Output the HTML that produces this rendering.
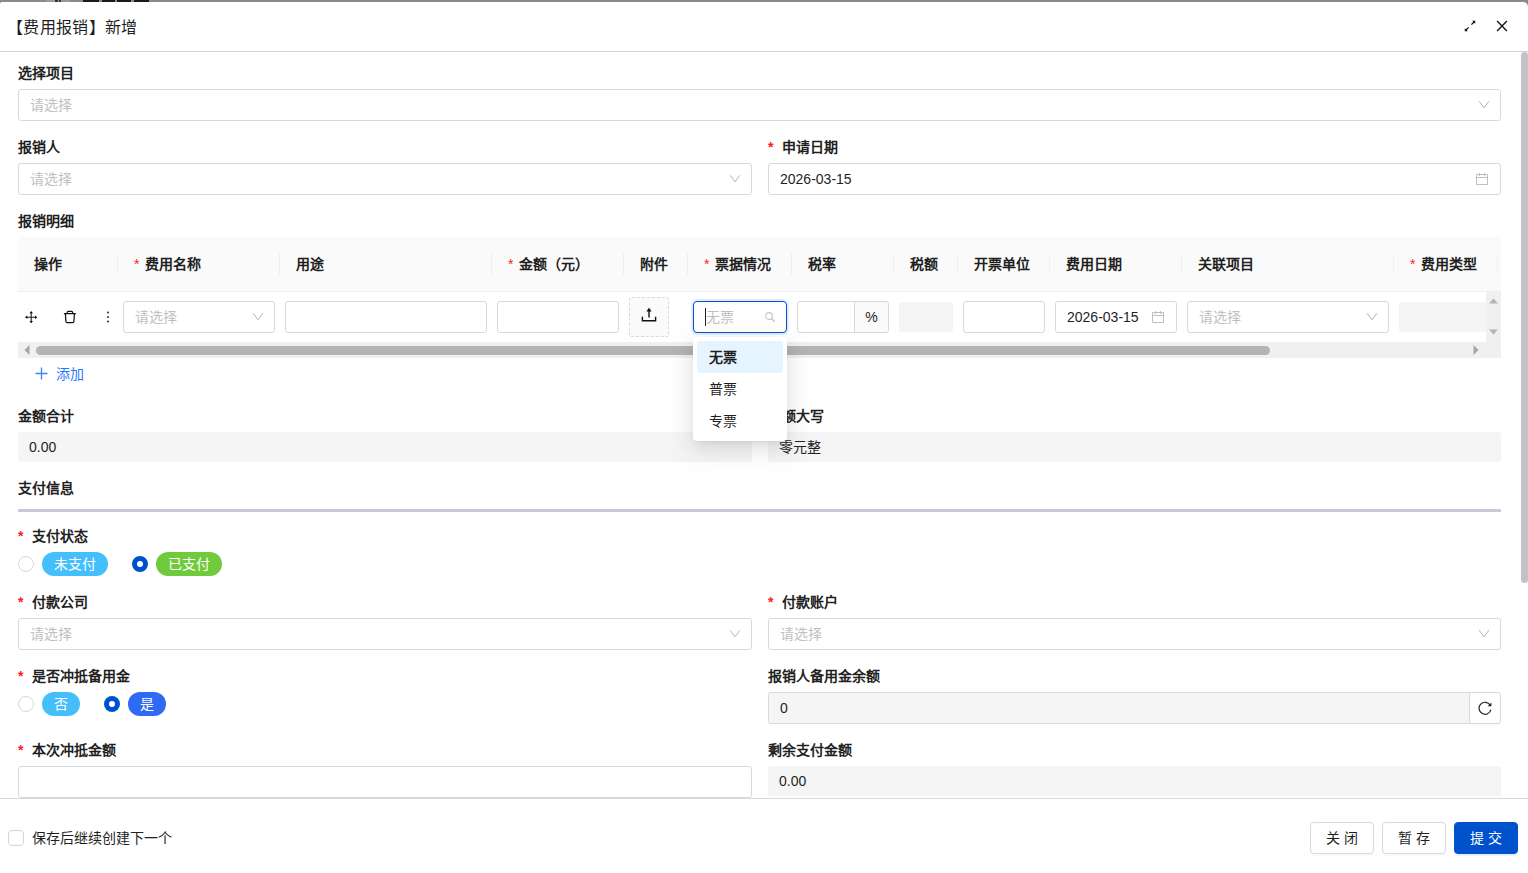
<!DOCTYPE html>
<html lang="zh-CN">
<head>
<meta charset="utf-8">
<title>费用报销 新增</title>
<style>
*{box-sizing:border-box;margin:0;padding:0}
html,body{width:1528px;height:873px;overflow:hidden;background:#8c8c8c;font-family:"Liberation Sans",sans-serif;font-size:14px;color:#1f1f1f}
.abs{position:absolute}
#backdrop{position:absolute;left:0;top:0;width:1528px;height:3px;background:#8a8a8a}
#dlg{position:absolute;left:0;top:2px;width:1528px;height:871px;background:#fff;border-radius:2px 5px 0 0;overflow:hidden}
#hdr{position:absolute;left:0;top:2px;width:1528px;height:50px;border-bottom:1px solid #d4d4d4}
#title{position:absolute;left:7px;top:15px;letter-spacing:.35px;font-size:16px;line-height:22px;color:#1f1f1f;white-space:nowrap}
.lbl{position:absolute;font-weight:bold;font-size:14px;line-height:22px;white-space:nowrap;color:#1f1f1f}
.lbl .req{color:#ff1a1a;font-weight:bold;display:inline-block;width:14px}
.inp{position:absolute;height:32px;border:1px solid #d9d9d9;border-radius:3px;background:#fff;font-size:14px;line-height:30px;padding-left:11px;white-space:nowrap;color:#1f1f1f}
.ph{color:#bfbfbf}
.fill{position:absolute;height:30px;border-radius:3px;background:#f5f5f5;line-height:30px;padding-left:11px;font-size:14px;color:#1f1f1f}
.chev{position:absolute;right:10px;top:8px;width:12px;height:12px}
.cal{position:absolute;right:11px;top:9px;width:14px;height:14px}
#vscroll{position:absolute;left:1521px;top:52px;width:7px;height:531px;background:#c1c3c9;border-radius:4px}
/* table */
#th{position:absolute;left:18px;top:237px;width:1483px;height:55px;background:#fafafa;border-bottom:1px solid #f0f0f0}
.thc{position:absolute;top:16px;font-weight:bold;line-height:22px;white-space:nowrap}
.thc .req{color:#ff1a1a;font-weight:normal;margin-right:6px}
.sep{position:absolute;top:16px;width:1px;height:22px;background:#f0f0f0}
#hs{position:absolute;left:18px;top:342px;width:1468px;height:16px;background:#f0f0f0}
#hs .thumb{position:absolute;left:18px;top:4px;width:1234px;height:9px;border-radius:4.5px;background:#b4b4b4}
.tag{position:absolute;height:24px;border-radius:12px;color:#fff;font-size:14px;line-height:24px;text-align:center}
.radio{position:absolute;width:16px;height:16px;border-radius:50%;border:1px solid #d9d9d9;background:#fff}
.radio.on{border:5px solid #0052cc}
#ftr{position:absolute;left:0;top:798px;width:1528px;height:75px;background:#fff;border-top:1px solid #d8d8d8}
.btn{position:absolute;top:23px;width:64px;height:32px;border:1px solid #d9d9d9;border-radius:4px;background:#fff;line-height:30px;text-align:center;font-size:14px;letter-spacing:4px;padding-left:4px;box-shadow:0 2px 0 rgba(0,0,0,.02)}
.btn.pri{background:#0052cc;border-color:#0052cc;color:#fff;box-shadow:0 2px 0 rgba(5,105,255,.1)}
#dd{position:absolute;left:693px;top:337px;width:94px;height:104px;background:#fff;border-radius:4px;box-shadow:0 6px 16px 0 rgba(0,0,0,.08),0 3px 6px -4px rgba(0,0,0,.12),0 9px 28px 8px rgba(0,0,0,.05)}
#dd .it{position:absolute;left:4px;width:86px;height:32px;line-height:32px;padding-left:12px;border-radius:3px}
</style>
</head>
<body>
<div id="backdrop"><div class="abs" style="left:46px;top:0;width:24px;height:2px;background:#9a9a9a"></div><div class="abs" style="left:55px;top:0;width:3px;height:2px;background:#333"></div><div class="abs" style="left:59px;top:0;width:2px;height:2px;background:#333"></div><div class="abs" style="left:83px;top:0;width:66px;height:2px;background:#1a1a1a"></div><div class="abs" style="left:99px;top:0;width:3px;height:2px;background:#8a8a8a"></div><div class="abs" style="left:115px;top:0;width:2px;height:2px;background:#8a8a8a"></div><div class="abs" style="left:131px;top:0;width:3px;height:2px;background:#8a8a8a"></div></div>
<div id="dlg"><div id="c" style="position:absolute;left:0;top:-2px;width:1528px;height:873px">
  <div id="hdr">
    <div id="title">【费用报销】新增</div>
    <svg class="abs" style="left:1463px;top:17px" width="14" height="14" viewBox="0 0 14 14"><path d="M2.2 11.8 L5.6 8.4 M8.4 5.6 L11.8 2.2" stroke="#111" stroke-width="1.3" fill="none"/><path d="M9.2 1.8h3v3z M1.8 9.2v3h3z" fill="#111"/></svg>
    <svg class="abs" style="left:1496px;top:18px" width="12" height="12" viewBox="0 0 12 12"><path d="M1.1 1 L10.9 11 M10.9 1 L1.1 11" stroke="#111" stroke-width="1.3" fill="none"/></svg>
  </div>
  <div class="lbl" style="left:18px;top:62px">选择项目</div>
  <div class="inp" style="left:18px;top:89px;width:1483px"><span class="ph">请选择</span><svg class="chev" viewBox="0 0 12 12"><path d="M1.2 3.3 L6 9.8 L10.8 3.3" fill="none" stroke="#b4b4b4" stroke-width="1"/></svg></div>
  <div class="lbl" style="left:18px;top:136px">报销人</div>
  <div class="inp" style="left:18px;top:163px;width:734px"><span class="ph">请选择</span><svg class="chev" viewBox="0 0 12 12"><path d="M1.2 3.3 L6 9.8 L10.8 3.3" fill="none" stroke="#b4b4b4" stroke-width="1"/></svg></div>
  <div class="lbl" style="left:768px;top:136px"><span class="req">*</span>申请日期</div>
  <div class="inp" style="left:768px;top:163px;width:733px">2026-03-15<svg class="cal" viewBox="0 0 14 14"><path d="M1.5 1.5h11v10h-11z M1.5 4.5h11 M4.5 0v3 M9.5 0v3" fill="none" stroke="#bfbfbf" stroke-width="1"/></svg></div>
  <div class="lbl" style="left:18px;top:210px">报销明细</div>
  <div id="th"><div class="thc" style="left:16px">操作</div><div class="thc" style="left:116px"><span class="req">*</span>费用名称</div><div class="thc" style="left:278px">用途</div><div class="thc" style="left:490px"><span class="req">*</span>金额（元）</div><div class="thc" style="left:622px">附件</div><div class="thc" style="left:686px"><span class="req">*</span>票据情况</div><div class="thc" style="left:790px">税率</div><div class="thc" style="left:892px">税额</div><div class="thc" style="left:956px">开票单位</div><div class="thc" style="left:1048px">费用日期</div><div class="thc" style="left:1180px">关联项目</div><div class="thc" style="left:1392px"><span class="req">*</span>费用类型</div><div class="sep" style="left:99px"></div><div class="sep" style="left:261px"></div><div class="sep" style="left:473px"></div><div class="sep" style="left:605px"></div><div class="sep" style="left:669px"></div><div class="sep" style="left:773px"></div><div class="sep" style="left:875px"></div><div class="sep" style="left:939px"></div><div class="sep" style="left:1031px"></div><div class="sep" style="left:1163px"></div><div class="sep" style="left:1375px"></div><div class="sep" style="left:1479px"></div></div>
  <!-- op icons -->
  <svg class="abs" style="left:24.8px;top:310.8px" width="12.4" height="12.4" viewBox="0 0 12 12"><path d="M6 1.2v9.6 M1.2 6h9.6" stroke="#1a1a1a" stroke-width="1.05" fill="none"/><path d="M6 0l1.7 2.3H4.3z M6 12l1.7-2.3H4.3z M0 6l2.3-1.7v3.4z M12 6l-2.3-1.7v3.4z" fill="#111"/></svg>
  <svg class="abs" style="left:63px;top:310px" width="14" height="14" viewBox="0 0 14 14"><path d="M0.9 3.5h12 M3.9 3.4 L4.4 1.9 Q4.6 1.4 5.2 1.4 H8.6 Q9.2 1.4 9.4 1.9 L9.9 3.4 M2.4 3.7 L2.9 11.5 Q3 12.6 4.1 12.6 H9.7 Q10.8 12.6 10.9 11.5 L11.4 3.7" stroke="#111" stroke-width="1.25" fill="none" stroke-linejoin="round"/></svg>
  <svg class="abs" style="left:106px;top:310px" width="4" height="14" viewBox="0 0 4 14"><circle cx="2" cy="2.5" r=".95" fill="#222"/><circle cx="2" cy="7" r=".95" fill="#222"/><circle cx="2" cy="11.5" r=".95" fill="#222"/></svg>
  <div class="inp" style="left:123px;top:301px;width:152px"><span class="ph">请选择</span><svg class="chev" viewBox="0 0 12 12"><path d="M1.2 3.3 L6 9.8 L10.8 3.3" fill="none" stroke="#b4b4b4" stroke-width="1"/></svg></div>
  <div class="inp" style="left:285px;top:301px;width:202px"></div>
  <div class="inp" style="left:497px;top:301px;width:122px"></div>
  <div class="abs" style="left:629px;top:297px;width:40px;height:40px;border:1px dashed #d9d9d9;border-radius:3px;background:#fafafa"></div>
  <svg class="abs" style="left:641px;top:307px" width="16" height="16" viewBox="0 0 16 16"><path d="M8 10.4V3.6 M1.4 9.8v4h13.2v-4" stroke="#111" stroke-width="1.4" fill="none"/><path d="M8 0.8L10.6 4.4H5.4z" fill="#111"/></svg>
  <div class="inp" style="left:693px;top:301px;width:94px;border:1px solid #0052cc;box-shadow:0 0 0 2px rgba(5,105,255,.12);border-radius:4px"><span class="ph" style="margin-left:1px">无票</span>
    <div class="abs" style="left:11px;top:6px;width:1px;height:18px;background:#222"></div>
    <svg class="abs" style="right:10px;top:9px" width="12" height="12" viewBox="0 0 12 12"><circle cx="5" cy="5" r="3.4" stroke="#c4c4c4" stroke-width="1.1" fill="none"/><path d="M7.5 7.5L10.8 10.8" stroke="#c4c4c4" stroke-width="1.3"/></svg></div>
  <div class="inp" style="left:797px;top:301px;width:58px;border-radius:3px 0 0 3px"></div>
  <div class="inp" style="left:854px;top:301px;width:35px;border-radius:0 3px 3px 0;background:#fafafa;padding-left:0;text-align:center">%</div>
  <div class="fill" style="left:899px;top:302px;width:54px"></div>
  <div class="inp" style="left:963px;top:301px;width:82px"></div>
  <div class="inp" style="left:1055px;top:301px;width:122px">2026-03-15<svg class="cal" viewBox="0 0 14 14"><path d="M1.5 1.5h11v10h-11z M1.5 4.5h11 M4.5 0v3 M9.5 0v3" fill="none" stroke="#bfbfbf" stroke-width="1"/></svg></div>
  <div class="inp" style="left:1187px;top:301px;width:202px"><span class="ph">请选择</span><svg class="chev" viewBox="0 0 12 12"><path d="M1.2 3.3 L6 9.8 L10.8 3.3" fill="none" stroke="#b4b4b4" stroke-width="1"/></svg></div>
  <div class="fill" style="left:1399px;top:302px;width:87px;border-radius:3px 0 0 3px"></div>
  <!-- mini vscroll -->
  <div class="abs" style="left:1486px;top:292px;width:15px;height:50px;background:#f0f0f0"></div>
  <svg class="abs" style="left:1489px;top:298px" width="9" height="6" viewBox="0 0 9 6"><path d="M4.5 0.5L9 5.5H0z" fill="#b4b4b4"/></svg>
  <svg class="abs" style="left:1489px;top:329px" width="9" height="6" viewBox="0 0 9 6"><path d="M4.5 5.5L9 0.5H0z" fill="#b4b4b4"/></svg>
  <div id="hs"><div class="thumb"></div>
    <svg class="abs" style="left:6px;top:3px" width="6" height="10" viewBox="0 0 6 10"><path d="M0.5 5L5.5 0v10z" fill="#a6a6a6"/></svg>
    <svg class="abs" style="left:1455px;top:3px" width="6" height="10" viewBox="0 0 6 10"><path d="M5.5 5L0.5 0v10z" fill="#a6a6a6"/></svg>
  </div>
  <div class="abs" style="left:1486px;top:342px;width:15px;height:16px;background:#f0f0f0"></div>
  <svg class="abs" style="left:35px;top:367px" width="13" height="13" viewBox="0 0 13 13"><path d="M6.5 0.5v12 M0.5 6.5h12" stroke="#3a86ff" stroke-width="1.3" fill="none"/></svg>
  <div class="abs" style="left:56px;top:363px;line-height:22px;color:#2a7bff">添加</div>

  <div class="lbl" style="left:18px;top:405px">金额合计</div>
  <div class="fill" style="left:18px;top:432px;width:734px">0.00</div>
  <div class="lbl" style="left:768px;top:405px">金额大写</div>
  <div class="fill" style="left:768px;top:432px;width:733px">零元整</div>
  <div class="lbl" style="left:18px;top:477px">支付信息</div>
  <div class="abs" style="left:18px;top:509px;width:1483px;height:3px;background:#c5cad6"></div>
  <div class="lbl" style="left:18px;top:525px"><span class="req">*</span>支付状态</div>
  <div class="radio" style="left:18px;top:556px"></div>
  <div class="tag" style="left:42px;top:552px;width:66px;background:#45bffc">未支付</div>
  <div class="radio on" style="left:132px;top:556px"></div>
  <div class="tag" style="left:156px;top:552px;width:66px;background:#70cb3c">已支付</div>
  <div class="lbl" style="left:18px;top:591px"><span class="req">*</span>付款公司</div>
  <div class="inp" style="left:18px;top:618px;width:734px"><span class="ph">请选择</span><svg class="chev" viewBox="0 0 12 12"><path d="M1.2 3.3 L6 9.8 L10.8 3.3" fill="none" stroke="#b4b4b4" stroke-width="1"/></svg></div>
  <div class="lbl" style="left:768px;top:591px"><span class="req">*</span>付款账户</div>
  <div class="inp" style="left:768px;top:618px;width:733px"><span class="ph">请选择</span><svg class="chev" viewBox="0 0 12 12"><path d="M1.2 3.3 L6 9.8 L10.8 3.3" fill="none" stroke="#b4b4b4" stroke-width="1"/></svg></div>
  <div class="lbl" style="left:18px;top:665px"><span class="req">*</span>是否冲抵备用金</div>
  <div class="radio" style="left:18px;top:696px"></div>
  <div class="tag" style="left:42px;top:692px;width:38px;background:#45bffc">否</div>
  <div class="radio on" style="left:104px;top:696px"></div>
  <div class="tag" style="left:128px;top:692px;width:38px;background:#2f6af5">是</div>
  <div class="lbl" style="left:768px;top:665px">报销人备用金余额</div>
  <div class="inp" style="left:768px;top:692px;width:702px;background:#f5f5f5;border-radius:3px 0 0 3px">0</div>
  <div class="inp" style="left:1469px;top:692px;width:32px;border-radius:0 3px 3px 0;padding:0;box-shadow:0 2px 0 rgba(0,0,0,.02)"></div>
  <svg class="abs" style="left:1478px;top:701px" width="14" height="14" viewBox="0 0 14 14"><path d="M12.2 4.2A6 6 0 1 0 12.9 8.6" stroke="#222" stroke-width="1.2" fill="none"/><path d="M13.4 1.6v3.6H9.8z" fill="#222"/></svg>
  <div class="lbl" style="left:18px;top:739px"><span class="req">*</span>本次冲抵金额</div>
  <div class="inp" style="left:18px;top:766px;width:734px"></div>
  <div class="lbl" style="left:768px;top:739px">剩余支付金额</div>
  <div class="fill" style="left:768px;top:766px;width:733px">0.00</div>
  <div id="vscroll"></div>
  <div id="ftr"><div class="abs" style="left:8px;top:31px;width:16px;height:16px;border:1px solid #d4d4d4;border-radius:4px;background:#fff"></div>
    <div class="abs" style="left:32px;top:28px;line-height:22px;white-space:nowrap">保存后继续创建下一个</div>
    <div class="btn" style="left:1310px">关闭</div>
    <div class="btn" style="left:1382px">暂存</div>
    <div class="btn pri" style="left:1454px">提交</div></div>
  <div id="dd">
    <div class="it" style="top:4px;background:#e6f4ff;font-weight:bold">无票</div>
    <div class="it" style="top:36px">普票</div>
    <div class="it" style="top:68px">专票</div>
  </div>
</div></div>
</body>
</html>
